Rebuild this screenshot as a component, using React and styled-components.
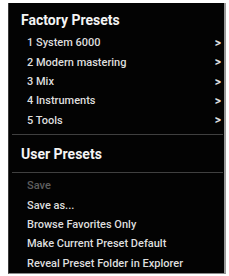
import React from "react";
import styled, { createGlobalStyle } from "styled-components";

const GlobalStyle = createGlobalStyle`
  html, body {
    margin: 0;
    padding: 0;
    background: #ffffff;
  }
  body {
    font-family: Roboto, "Liberation Sans", sans-serif;
  }
`;

const factoryPresets = [
  "1 System 6000",
  "2 Modern mastering",
  "3 Mix",
  "4 Instruments",
  "5 Tools",
];

const userActions = [
  { label: "Save", disabled: true },
  { label: "Save as..." },
  { label: "Browse Favorites Only" },
  { label: "Make Current Preset Default" },
  { label: "Reveal Preset Folder in Explorer" },
];

const Page = styled.div`
  padding: 3px 0 0 8px;
`;

const Menu = styled.div`
  width: 218px;
  height: 271px;
  box-sizing: border-box;
  background: #030303;
  border-left: 1px solid #3a3a3a;
  border-right: 2px solid #9a9a9a;
  border-bottom: 1px solid #8a8a8a;
  overflow: hidden;
  display: flex;
  flex-direction: column;
`;

const Heading = styled.div`
  height: 16px;
  line-height: 16px;
  padding: ${(p) => p.$pad};
  padding-left: 12px;
  color: #f4f4f4;
  font-size: 14px;
  font-weight: 700;
`;

const Row = styled.div`
  height: 19.5px;
  display: flex;
  align-items: center;
  justify-content: space-between;
  padding: 0 3px 0 18px;
  color: ${(p) => (p.$disabled ? "#5e5e5e" : "#dedede")};
  font-size: 11px;
  font-weight: 500;
  white-space: nowrap;
`;

const Chevron = styled.span`
  color: #e0e0e0;
  font-size: 12px;
  font-weight: 700;
`;

const Divider = styled.div`
  height: 1px;
  margin: ${(p) => p.$margin};
  margin-left: 3px;
  margin-right: 1px;
  background: #404040;
`;

export default function App() {
  return (
    <>
      <GlobalStyle />
      <Page>
        <Menu>
          <Heading $pad="9px 0 5px">Factory Presets</Heading>
          {factoryPresets.map((name) => (
            <Row key={name}>
              <span>{name}</span>
              <Chevron>&gt;</Chevron>
            </Row>
          ))}
          <Divider $margin="4px 0 0" />
          <Heading $pad="11px 0 10px">User Presets</Heading>
          <Divider $margin="0 0 3px" />
          {userActions.map((a) => (
            <Row key={a.label} $disabled={a.disabled}>
              <span>{a.label}</span>
            </Row>
          ))}
        </Menu>
      </Page>
    </>
  );
}
